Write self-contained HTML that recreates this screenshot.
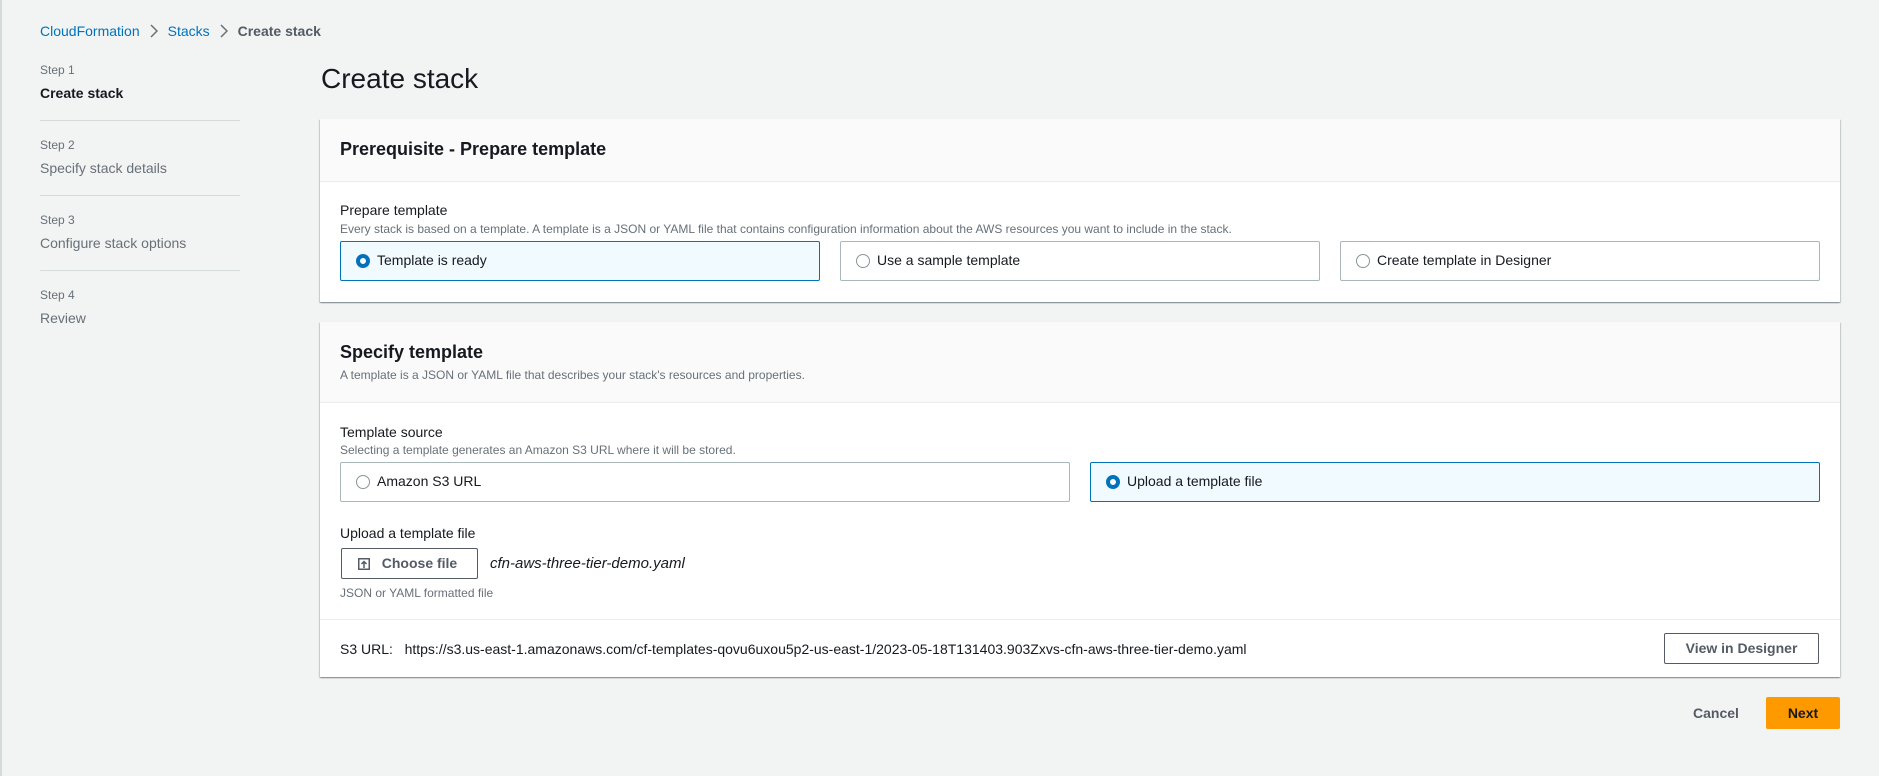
<!DOCTYPE html>
<html><head><meta charset="utf-8"><style>
*{box-sizing:border-box;margin:0;padding:0}
body{width:1879px;height:776px;background:#f2f3f3;font-family:"Liberation Sans",sans-serif;color:#16191f;position:relative;overflow:hidden;font-size:14px}
.a{position:absolute;white-space:nowrap}
.link{color:#0073bb}
.sm{font-size:12px;color:#687078}
.step{font-size:12px;color:#687078}
.sl{font-size:14px;color:#687078}
.div{position:absolute;left:40px;width:200px;height:1px;background:#d5dbdb}
.panel{position:absolute;left:320px;width:1520px;background:#fff;box-shadow:0 1px 1px 0 rgba(0,28,36,.3),1px 1px 1px 0 rgba(0,28,36,.15),-1px 1px 1px 0 rgba(0,28,36,.15)}
.ph{position:absolute;left:0;top:0;width:1520px;background:#fafafa;border-bottom:1px solid #eaeded}
.box{position:absolute;border:1px solid #aab7b8;border-radius:2px;background:#fff}
.box.sel{border-color:#0073bb;background:#f1faff}
.rad{position:absolute;left:15px;top:12px;width:14px;height:14px;border-radius:50%;border:1px solid #879596;background:#fff}
.sel .rad{border:4px solid #0073bb}
.box .t{position:absolute;left:36px;top:10px;font-size:14px;color:#16191f}
.btn{position:absolute;border:1px solid #545b64;border-radius:2px;background:#fff;font-weight:bold;color:#545b64;font-size:14px;text-align:center}
.chev{display:inline-block;vertical-align:-2px;margin:0 10px}
</style></head><body>
<div class="a" style="left:0;top:0;width:2px;height:776px;background:#d5dbdb"></div>
<div class="a" style="left:40px;top:23px"><span class="link">CloudFormation</span><svg class="chev" width="8" height="14" viewBox="0 0 8 14"><path d="M1 1l6 6-6 6" fill="none" stroke="#687078" stroke-width="1.5"/></svg><span class="link">Stacks</span><svg class="chev" width="8" height="14" viewBox="0 0 8 14"><path d="M1 1l6 6-6 6" fill="none" stroke="#687078" stroke-width="1.5"/></svg><span style="color:#545b64;font-weight:bold">Create stack</span></div>

<div class="a step" style="left:40px;top:63px">Step 1</div>
<div class="a" style="left:40px;top:85px;font-weight:bold">Create stack</div>
<div class="div" style="top:120px"></div>
<div class="a step" style="left:40px;top:138px">Step 2</div>
<div class="a sl" style="left:40px;top:160px">Specify stack details</div>
<div class="div" style="top:195px"></div>
<div class="a step" style="left:40px;top:213px">Step 3</div>
<div class="a sl" style="left:40px;top:235px">Configure stack options</div>
<div class="div" style="top:270px"></div>
<div class="a step" style="left:40px;top:288px">Step 4</div>
<div class="a sl" style="left:40px;top:310px">Review</div>

<div class="a" style="left:321px;top:63px;font-size:28px;color:#16191f">Create stack</div>

<div class="panel" style="top:119px;height:183px">
 <div class="ph" style="height:63px"></div>
 <div class="a" style="left:20px;top:20px;font-size:18px;font-weight:bold">Prerequisite - Prepare template</div>
 <div class="a" style="left:20px;top:83px">Prepare template</div>
 <div class="a sm" style="left:20px;top:103px">Every stack is based on a template. A template is a JSON or YAML file that contains configuration information about the AWS resources you want to include in the stack.</div>
 <div class="box sel" style="left:20px;top:122px;width:480px;height:40px"><div class="rad"></div><div class="t">Template is ready</div></div>
 <div class="box" style="left:520px;top:122px;width:480px;height:40px"><div class="rad"></div><div class="t">Use a sample template</div></div>
 <div class="box" style="left:1020px;top:122px;width:480px;height:40px"><div class="rad"></div><div class="t">Create template in Designer</div></div>
</div>

<div class="panel" style="top:322px;height:355px">
 <div class="ph" style="height:81px"></div>
 <div class="a" style="left:20px;top:20px;font-size:18px;font-weight:bold">Specify template</div>
 <div class="a sm" style="left:20px;top:46px">A template is a JSON or YAML file that describes your stack's resources and properties.</div>
 <div class="a" style="left:20px;top:102px">Template source</div>
 <div class="a sm" style="left:20px;top:121px">Selecting a template generates an Amazon S3 URL where it will be stored.</div>
 <div class="box" style="left:20px;top:140px;width:730px;height:40px"><div class="rad"></div><div class="t">Amazon S3 URL</div></div>
 <div class="box sel" style="left:770px;top:140px;width:730px;height:40px"><div class="rad"></div><div class="t">Upload a template file</div></div>
 <div class="a" style="left:20px;top:203px">Upload a template file</div>
 <div class="btn" style="left:21px;top:226px;width:137px;height:31px;line-height:29px;padding-left:20px">Choose file
  <svg style="position:absolute;left:16px;top:9px" width="12" height="12" viewBox="0 0 12 12"><rect x="0.75" y="0.75" width="10.5" height="10.5" fill="none" stroke="#545b64" stroke-width="1.5"/><path d="M6 10V3.5M3.5 6L6 3.5 8.5 6" fill="none" stroke="#545b64" stroke-width="1.5"/></svg></div>
 <div class="a" style="left:170px;top:233px;font-style:italic;font-size:15px">cfn-aws-three-tier-demo.yaml</div>
 <div class="a sm" style="left:20px;top:264px">JSON or YAML formatted file</div>
 <div class="a" style="left:0;top:297px;width:1520px;height:1px;background:#eaeded"></div>
 <div class="a" style="left:20px;top:319px;color:#16191f">S3 URL:&nbsp;&nbsp; https://s3.us-east-1.amazonaws.com/cf-templates-qovu6uxou5p2-us-east-1/2023-05-18T131403.903Zxvs-cfn-aws-three-tier-demo.yaml</div>
 <div class="btn" style="left:1344px;top:311px;width:155px;height:31px;line-height:29px">View in Designer</div>
</div>

<div class="a" style="left:1693px;top:705px;font-weight:bold;color:#545b64">Cancel</div>
<div class="a" style="left:1766px;top:697px;width:74px;height:32px;background:#ff9900;border-radius:2px;font-weight:bold;color:#16191f;text-align:center;line-height:32px">Next</div>
</body></html>
